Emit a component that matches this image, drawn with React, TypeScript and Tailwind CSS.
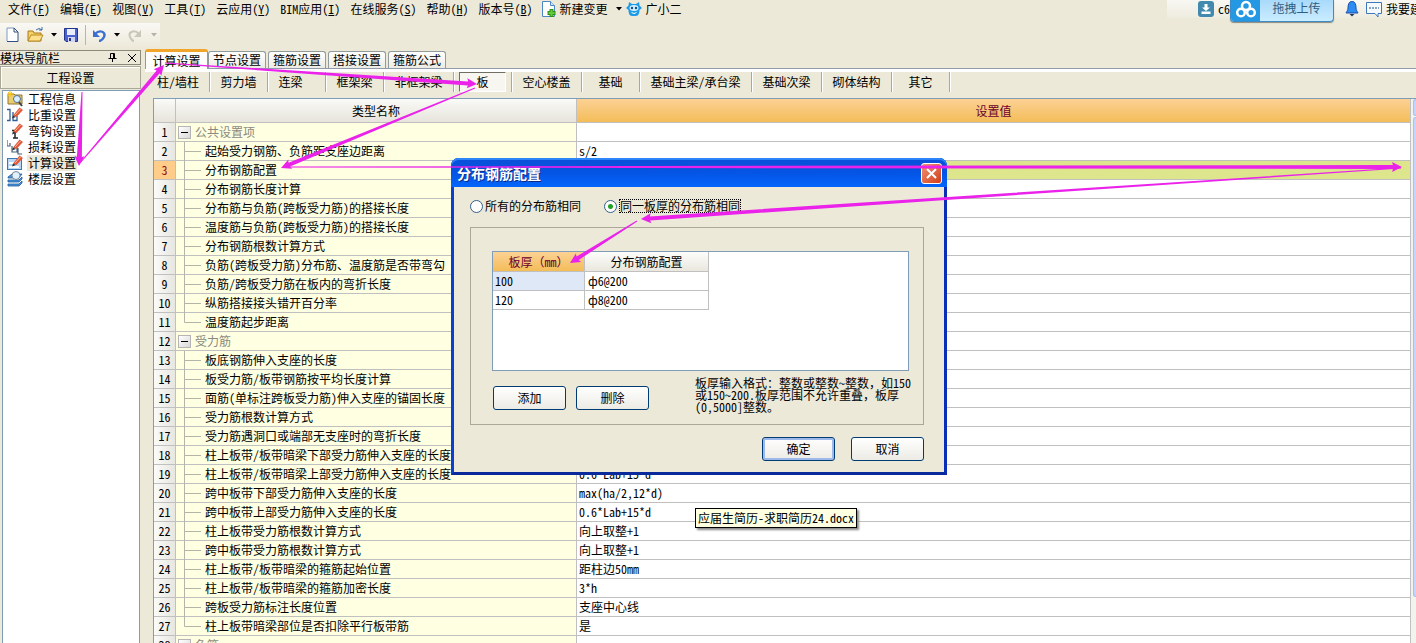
import React, { useState } from "react";

type Row = { name: string; value?: string; group?: boolean; last?: boolean; selected?: boolean };

const rows: Row[] = [
  { name: "公共设置项", group: true },
  { name: "起始受力钢筋、负筋距支座边距离", value: "s/2" },
  { name: "分布钢筋配置", selected: true },
  { name: "分布钢筋长度计算" },
  { name: "分布筋与负筋(跨板受力筋)的搭接长度" },
  { name: "温度筋与负筋(跨板受力筋)的搭接长度" },
  { name: "分布钢筋根数计算方式" },
  { name: "负筋(跨板受力筋)分布筋、温度筋是否带弯勾" },
  { name: "负筋/跨板受力筋在板内的弯折长度" },
  { name: "纵筋搭接接头错开百分率" },
  { name: "温度筋起步距离", last: true },
  { name: "受力筋", group: true },
  { name: "板底钢筋伸入支座的长度" },
  { name: "板受力筋/板带钢筋按平均长度计算" },
  { name: "面筋(单标注跨板受力筋)伸入支座的锚固长度" },
  { name: "受力筋根数计算方式" },
  { name: "受力筋遇洞口或端部无支座时的弯折长度" },
  { name: "柱上板带/板带暗梁下部受力筋伸入支座的长度" },
  { name: "柱上板带/板带暗梁上部受力筋伸入支座的长度", value: "0.6*Lab+15*d" },
  { name: "跨中板带下部受力筋伸入支座的长度", value: "max(ha/2,12*d)" },
  { name: "跨中板带上部受力筋伸入支座的长度", value: "0.6*Lab+15*d" },
  { name: "柱上板带受力筋根数计算方式", value: "向上取整+1" },
  { name: "跨中板带受力筋根数计算方式", value: "向上取整+1" },
  { name: "柱上板带/板带暗梁的箍筋起始位置", value: "距柱边50mm" },
  { name: "柱上板带/板带暗梁的箍筋加密长度", value: "3*h" },
  { name: "跨板受力筋标注长度位置", value: "支座中心线" },
  { name: "柱上板带暗梁部位是否扣除平行板带筋", value: "是", last: true },
  { name: "负筋", group: true },
];

const menus: [string, string][] = [
  ["文件", "F"], ["编辑", "E"], ["视图", "V"], ["工具", "T"], ["云应用", "Y"],
  ["BIM应用", "I"], ["在线服务", "S"], ["帮助", "H"], ["版本号", "B"],
];

const categories: [string, string][] = [
  ["柱/墙柱", "w-[59px] pr-1"], ["剪力墙", "w-[58px]"], ["连梁", "w-[58px] pr-3"], ["框架梁", "w-[58px]"],
  ["非框架梁", "w-[70px]"], ["板", "w-[58px]"], ["空心楼盖", "w-[70px]"], ["基础", "w-[58px]"],
  ["基础主梁/承台梁", "w-[112px]"], ["基础次梁", "w-[70px]"], ["砌体结构", "w-[70px]"], ["其它", "w-[58px]"],
];

const arrows: [number, number, number, number, number][] = [
  [82, 92, 79, 166, 5],
  [80, 163, 164, 65, 4],
  [165, 63, 477, 84, 4],
  [475, 88, 281, 168, 4],
  [284, 167, 1402, 167, 4],
  [1401, 168, 641, 219, 4],
  [637, 221, 570, 263, 4],
];

function arrowPoints([x1, y1, x2, y2, w]: [number, number, number, number, number]) {
  const len = Math.hypot(x2 - x1, y2 - y1);
  const ux = (x2 - x1) / len;
  const uy = (y2 - y1) / len;
  const at = (d: number, s: number) => `${x1 + ux * d - uy * s},${y1 + uy * d + ux * s}`;
  return [at(0, 0.5), at(len - 9, w / 2), at(len - 10, 5), at(len, 0), at(len - 10, -5), at(len - 9, -w / 2), at(0, -0.5)].join(" ");
}

function Caret({ dim }: { dim?: boolean }) {
  return (
    <svg width="6" height="4" viewBox="0 0 6 4" className="shrink-0">
      <path d="M0 0h6L3 3.4z" fill={dim ? "#b5b3a8" : "#000"} />
    </svg>
  );
}

function Pencil() {
  return (
    <g>
      <path d="M6 8.500 12.500 0.500 16 3 9.500 10z" fill="#e05a3a" />
      <path d="M8 8l5.500-6" stroke="#ffb59a" />
      <path d="M5 11.500 6 8.500 9 10z" fill="#333" />
    </g>
  );
}

function NavIcon({ kind }: { kind: number }) {
  return (
    <svg width="16" height="16" viewBox="0 0 16 16" className="shrink-0">
      {kind === 0 && (
        <g>
          <path d="M1 3h6l1 1h7v9H1z" fill="#eccd6d" stroke="#8f7430" />
          <path d="M3 0v6M0 3h6M1 1l4 4M5 1L1 5" stroke="#f5c518" />
          <circle cx="10" cy="8" r="3.500" fill="#d9efff" stroke="#51718e" />
          <path d="M12 11l3 4" stroke="#444" strokeWidth="2" />
        </g>
      )}
      {kind === 1 && (
        <g>
          <path d="M0 2.500h3v11H0M6 5v8.500h4V9" fill="none" stroke="#2f5f96" strokeWidth="1.300" />
          <Pencil />
        </g>
      )}
      {kind === 2 && (
        <g>
          <path d="M5 7.500h3v7M6 15h5" fill="none" stroke="#222" strokeWidth="1.500" />
          <Pencil />
        </g>
      )}
      {kind === 3 && (
        <g>
          <path d="M0 1v6h3V4M5 7v6h5V9M11 9v6h4" fill="none" stroke="#46627c" strokeWidth="1.200" />
          <Pencil />
        </g>
      )}
      {kind === 4 && (
        <g>
          <rect x="0.500" y="3.500" width="14" height="11" fill="#b9d8f6" stroke="#3c78b8" />
          <path d="M2 8h5M2 12h10" stroke="#fff" strokeWidth="2" />
          <Pencil />
        </g>
      )}
      {kind === 5 && (
        <g>
          <path d="M1 6l4-3h10l-3 4H1zM1 9h11l3-3v2l-3 3H1zM1 13h11l3-3v2l-3 3H1z" fill="#4d96dc" stroke="#1c5b9e" strokeWidth="0.800" />
          <circle cx="9" cy="4.500" r="4" fill="#dff1ff" stroke="#7a8995" />
        </g>
      )}
    </svg>
  );
}

function MenuBar() {
  return (
    <header className="flex h-[18px] shrink-0 items-center pl-2">
      <nav className="flex gap-[10px]">
        {menus.map(([label, key]) => (
          <button key={key} className="h-[18px]">
            {label}(<span className="underline">{key}</span>)
          </button>
        ))}
      </nav>
      <button className="ml-2 flex items-center">
        <svg width="15" height="18" viewBox="0 0 15 18">
          <path d="M1.500 1.500h8l4 4v11h-12z" fill="#fff" stroke="#4c87c7" />
          <path d="M9.500 1.500v4h4" fill="#d4e6fa" stroke="#4c87c7" />
          <path d="M10.500 9v8M6.500 13h8" stroke="#2f8f1b" strokeWidth="4" />
          <path d="M10.500 10v6M7.500 13h6" stroke="#65c93c" strokeWidth="2" />
        </svg>
        <span className="mr-2 ml-1">新建变更</span>
        <Caret />
      </button>
      <button className="ml-1 flex items-center gap-1">
        <svg width="16" height="16" viewBox="0 0 16 16">
          <path d="M3 1l3 2h4l3-2 .5 3.500L16 7l-2.500 2c0 3-1 6-3.500 6H6c-2.500 0-3.500-3-3.500-6L0 7l2.500-2.500z" fill="#1e9be6" />
          <ellipse cx="8" cy="7" rx="4.500" ry="3" fill="#d5f0ff" />
          <circle cx="6" cy="7" r="1.200" fill="#124d85" />
          <circle cx="10" cy="7" r="1.200" fill="#124d85" />
          <path d="M5.500 11.500q2.500 2 5 0" fill="none" stroke="#fff" />
        </svg>
        广小二
      </button>
      <div className="ml-auto flex h-[18px] w-[249px] items-center overflow-x-clip bg-linear-to-b from-[#f8f7f2] to-[#efecdf] pl-[31px] whitespace-nowrap">
        <svg width="16" height="16" viewBox="0 0 16 16" className="shrink-0">
          <rect width="16" height="16" rx="3" fill="#4389ae" />
          <path d="M6.500 3h3v3.500H12L8 10 4 6.500h2.500zM3.500 10.500h9V13h-9z" fill="#fff" />
        </svg>
        <span className="ml-1 w-3 shrink-0">c6</span>
        <button className="flex h-[22px] w-[104px] shrink-0 items-center self-start overflow-hidden rounded-b border border-t-0 border-[#3d8cc6] bg-linear-to-b from-[#a9dafb] to-[#c9ecff] text-[#2f5d80] shadow-[0_1px_1px_#8a8a80]">
          <svg width="29" height="22" viewBox="0 0 29 22">
            <rect width="29" height="22" fill="#2598e4" />
            <g fill="none" stroke="#fff" strokeWidth="2.500">
              <circle cx="15" cy="6" r="4" />
              <circle cx="10" cy="12.500" r="3.800" />
              <circle cx="20" cy="12.500" r="3.800" />
            </g>
          </svg>
          <span className="flex-1 self-start text-center">拖拽上传</span>
        </button>
        <svg width="14" height="16" viewBox="0 0 14 16" className="ml-[11px] shrink-0">
          <path d="M7 0c3 1 4 3 4 7 0 2 1 3 2 5H1c1-2 2-3 2-5 0-4 1-6 4-7z" fill="#2d8cf2" stroke="#1c4da8" />
          <path d="M4.500 13h5L7 15.500z" fill="#223a5c" />
        </svg>
        <svg width="16" height="16" viewBox="0 0 16 16" className="ml-[7px] shrink-0">
          <path d="M.5 1.500h15v11H12V16l-3-3.500H.5z" fill="#f5faff" stroke="#3f77ba" />
          <path d="M3 7h10" stroke="#234f8a" strokeDasharray="2 1" />
        </svg>
        <span className="ml-1">我要建</span>
      </div>
    </header>
  );
}

function Toolbar() {
  return (
    <div className="mt-[5px] flex h-6 w-40 shrink-0 items-center bg-linear-to-b from-[#f9f8f4] to-[#edeadb] pl-[6px]">
      <button aria-label="新建">
        <svg width="13" height="16" viewBox="0 0 13 16">
          <path d="M1 1h7l4 4v9.500H1z" fill="#fff" />
          <path d="M1 14V1h7" fill="none" stroke="#7d9ac8" />
          <path d="M8 1l4 4v9.500H1M8 1v4h4" fill="none" stroke="#31507f" />
        </svg>
      </button>
      <button aria-label="打开" className="ml-2 flex items-center gap-[6px]">
        <svg width="18" height="16" viewBox="0 0 18 16">
          <path d="M1 14V4h5l1 2h7v8z" fill="#f6cf67" stroke="#a87b1c" />
          <path d="M1 14l3-6h12l-3 6z" fill="#ffe08a" stroke="#b88a25" />
          <path d="M9 3q3-3 6 0M15 0v3h-3" fill="none" stroke="#3f6ea3" />
        </svg>
        <Caret />
      </button>
      <button aria-label="保存" className="ml-[7px]">
        <svg width="14" height="14" viewBox="0 0 14 14">
          <path d="M.5.5h13v13H2l-1.500-1.500z" fill="#4c63cf" stroke="#26358c" />
          <rect x="3" y="1" width="8" height="6" fill="#e8eefc" />
          <rect x="4" y="9" width="7" height="5" fill="#cfd6ee" />
          <rect x="5" y="10" width="2" height="3" fill="#26358c" />
        </svg>
      </button>
      <span className="ml-[7px] h-5 w-px bg-[#b9b6a5]" />
      <button aria-label="撤销" className="ml-[7px] flex items-center gap-2">
        <svg width="13" height="13" viewBox="0 0 13 13">
          <path d="M2 5c5-5 11-2 9 3-1 2-3 4-5 4" fill="none" stroke="#3b6fd0" strokeWidth="2.400" />
          <path d="M0 1v7h7z" fill="#3b6fd0" />
        </svg>
        <Caret />
      </button>
      <button aria-label="重做" className="ml-2 flex items-center gap-[10px]">
        <svg width="13" height="13" viewBox="0 0 13 13">
          <path d="M11 5C6 0 0 3 2 8c1 2 2 4 4 4" fill="none" stroke="#c9c6ba" strokeWidth="2" />
          <path d="M13 1v7H6z" fill="#c9c6ba" />
        </svg>
        <Caret dim />
      </button>
    </div>
  );
}

function Sidebar() {
  return (
    <aside className="flex w-[141px] shrink-0 flex-col pt-[3px]">
      <div className="flex h-[15px] items-center border border-l-0 border-[#8b897b] leading-[13px]">
        <span>模块导航栏</span>
        <svg width="9" height="9" viewBox="0 0 9 9" className="ml-auto">
          <path d="M2.500 5V.5h4V5M.5 5.500h8M4.500 6v3M5.500 1v4" fill="none" stroke="#000" />
        </svg>
        <svg width="8" height="8" viewBox="0 0 8 8" className="mr-1 ml-[11px]">
          <path d="M0 0l8 8M8 0L0 8" stroke="#000" />
        </svg>
      </div>
      <button className="mt-px h-[23px] border border-[#aaa899] bg-[#ece9d8] shadow-[inset_1px_1px_#fff]">工程设置</button>
      <ul className="mt-px mr-px ml-[2px] flex-1 border border-b-0 border-[#7f9db9] bg-white">
        {["工程信息", "比重设置", "弯钩设置", "损耗设置", "计算设置", "楼层设置"].map((t, i) => (
          <li key={t} className="flex h-4 items-center gap-1 pl-1">
            <NavIcon kind={i} />
            <button className={i === 4 ? "h-4 bg-[#ece9d8] px-px leading-4" : "h-4 px-px leading-4"}>{t}</button>
          </li>
        ))}
      </ul>
    </aside>
  );
}

function SettingsTable() {
  return (
    <div className="ml-2 flex min-h-0 flex-1 overflow-hidden border-t border-l border-[#7f9db9] bg-white">
      <div className="min-w-0 flex-1">
        <table className="w-full table-fixed border-separate border-spacing-0">
          <colgroup>
            <col className="w-[22px]" />
            <col className="w-[401px]" />
            <col />
          </colgroup>
          <thead>
            <tr className="h-6">
              <th className="border-r border-b border-[#c0c0c0] bg-linear-to-b from-[#fafaf7] to-[#e6e4db] p-0" />
              <th className="border-r border-b border-[#c0c0c0] bg-linear-to-b from-[#fafaf7] to-[#e6e4db] p-0 font-normal">类型名称</th>
              <th className="border-r border-b border-[#c0c0c0] bg-linear-to-b from-[#fcd193] to-[#f3bd57] p-0 font-normal text-[#6b0030]">设置值</th>
            </tr>
          </thead>
          <tbody>
            {rows.map((r, i) => (
              <tr key={i} className="h-[19px]">
                <td className={"border-r border-b border-[#c0c0c0] p-0 text-center " + (r.selected ? "bg-[#ffcc8a] text-[#8c1010]" : "bg-linear-to-r from-[#fbfbf9] to-[#e7e6e0]")}>
                  {i + 1}
                </td>
                <td className="border-r border-b border-[#c0c0c0] bg-[#ffffe1] p-0">
                  <div className="flex h-[18px] items-center whitespace-nowrap">
                    {r.group ? (
                      <>
                        <button aria-label="折叠" className="ml-[2px] flex h-[13px] w-[13px] items-center justify-center border border-[#b5b5b5] bg-linear-to-br from-white to-[#d8d8d8]">
                          <span className="h-px w-[7px] bg-black" />
                        </button>
                        <span className="ml-1 text-[#8a8a80]">{r.name}</span>
                      </>
                    ) : (
                      <>
                        <svg width="17" height="19" viewBox="0 0 17 19" className="ml-2 shrink-0 self-start overflow-visible">
                          <path d={r.last ? "M.5 0V9.500H17" : "M.5 0V19M0 9.500H17"} fill="none" stroke="#b4b4a8" />
                        </svg>
                        <span className="ml-1">{r.name}</span>
                      </>
                    )}
                  </div>
                </td>
                <td className={"border-r border-b border-[#c0c0c0] p-0 pl-[2px] " + (r.selected ? "bg-[#dde68c]" : "bg-white")}>{r.value}</td>
              </tr>
            ))}
          </tbody>
        </table>
      </div>
      <div className="w-[5px] shrink-0 bg-[#f3f3ee] pl-[2px]">
        <div className="h-[17px] rounded-l border border-r-0 border-[#a9bff0] bg-[#c6d5fd]" />
        <div className="mt-px h-[480px] rounded-l border border-r-0 border-[#a9bff0] bg-[#c6d5fd]" />
      </div>
    </div>
  );
}

const xpButton =
  "h-6 w-[73px] rounded-[3px] border border-[#003c74] bg-linear-to-b from-white to-[#ecebe5]";

function Dialog() {
  const [same, setSame] = useState(true);
  return (
    <section
      role="dialog"
      aria-label="分布钢筋配置"
      className="absolute top-[158px] left-[451px] flex h-[317px] w-[496px] flex-col rounded-t-lg border-[3px] border-t-0 border-[#0a3fd0] border-r-[#0a2fb4] border-b-[#0a2a9c] bg-[#ece9d8]"
    >
      <div className="-mx-[3px] flex h-[29px] shrink-0 items-center justify-between rounded-t-lg bg-linear-to-b from-[#0a50d8] via-[#0554e4] to-[#0266fc] pt-px pr-[5px] pl-[6px] shadow-[inset_0_2px_#2c84f8]">
        <h2 className="text-[14px] font-bold text-white [text-shadow:1px_1px_#0a2a86]">分布钢筋配置</h2>
        <button aria-label="关闭" className="flex h-[21px] w-[21px] items-center justify-center rounded-[3px] border border-white bg-linear-to-br from-[#ee9272] to-[#cf3a10]">
          <svg width="11" height="11" viewBox="0 0 11 11">
            <path d="M1 1l9 9M10 1l-9 9" stroke="#fff" strokeWidth="2" />
          </svg>
        </button>
      </div>
      <div className="mt-[11px] flex h-4 items-center pl-4">
        <label className="flex items-center gap-[2px]">
          <input type="radio" name="scope" checked={!same} onChange={() => setSame(false)} className="h-[13px] w-[13px] appearance-none rounded-full border border-[#335f8c] bg-white" />
          所有的分布筋相同
        </label>
        <label className="ml-[23px] flex items-center gap-[2px]">
          <input type="radio" name="scope" checked={same} onChange={() => setSame(true)} className="h-[13px] w-[13px] appearance-none rounded-full border border-[#335f8c] bg-white checked:bg-[radial-gradient(circle,#21a121_2px,#ffffff_3px)]" />
          <span className="border border-dotted border-black leading-[12px]">同一板厚的分布筋相同</span>
        </label>
      </div>
      <div className="mr-5 ml-4 mt-[13px] flex h-[198px] shrink-0 flex-col border border-[#aca899] pl-[21px] pt-[23px]">
        <div className="h-[120px] w-[417px] shrink-0 border border-[#7f9db9] bg-white">
          <table className="table-fixed border-separate border-spacing-0">
            <colgroup>
              <col className="w-[92px]" />
              <col className="w-[124px]" />
            </colgroup>
            <thead>
              <tr className="h-5">
                <th className="border-r border-b border-[#c0c0c0] bg-linear-to-b from-[#fcd193] to-[#f3bd57] p-0 font-normal whitespace-nowrap text-[#6b0030]">板厚（mm）</th>
                <th className="border-r border-b border-[#c0c0c0] bg-linear-to-b from-[#fdfdfb] to-[#e9e7de] p-0 font-normal">分布钢筋配置</th>
              </tr>
            </thead>
            <tbody>
              <tr className="h-[19px]">
                <td className="border-r border-b border-[#c0c0c0] bg-[#dfe8f6] p-0 pl-[2px]">100</td>
                <td className="border-r border-b border-[#c0c0c0] p-0 pl-[3px]">ф6@200</td>
              </tr>
              <tr className="h-[19px]">
                <td className="border-r border-b border-[#c0c0c0] p-0 pl-[2px]">120</td>
                <td className="border-r border-b border-[#c0c0c0] p-0 pl-[3px]">ф8@200</td>
              </tr>
            </tbody>
          </table>
        </div>
        <div className="flex pt-[6px]">
          <div className="flex gap-[10px] pt-[9px] pl-px">
            <button className={xpButton}>添加</button>
            <button className={xpButton}>删除</button>
          </div>
          <p className="ml-[46px] leading-3 whitespace-nowrap">
            板厚输入格式：整数或整数~整数，如150
            <br />
            或150~200.板厚范围不允许重叠，板厚
            <br />
            (0,5000]整数。
          </p>
        </div>
      </div>
      <div className="mt-3 mr-5 flex justify-end gap-4">
        <button className={xpButton + " shadow-[inset_0_0_0_2px_#9db9ec]"}>确定</button>
        <button className={xpButton}>取消</button>
      </div>
    </section>
  );
}

export default function App() {
  return (
    <div className="relative flex h-screen flex-col overflow-hidden bg-[#ece9d8] font-['Noto_Sans_Mono_CJK_SC','Noto_Sans_CJK_SC',sans-serif] text-[12px] leading-[16px] text-black">
      <MenuBar />
      <Toolbar />
      <div className="flex min-h-0 flex-1">
        <Sidebar />
        <main className="ml-1 flex min-w-0 flex-1 flex-col pt-[2px]">
          <div className="flex h-5 shrink-0 items-end gap-[2px] border-b border-[#8f9bab]">
            {["计算设置", "节点设置", "箍筋设置", "搭接设置", "箍筋公式"].map((t, i) => (
              <button
                key={t}
                className={
                  i === 0
                    ? "-mr-[2px] -mb-px h-5 w-[63px] rounded-t-[3px] border border-t-[3px] border-b-0 border-[#919b9c] border-t-[#f2a52b] bg-[#fcfcfa] leading-[16px]"
                    : "h-[17px] w-[58px] rounded-t-[3px] border border-b-0 border-[#919b9c] bg-linear-to-b from-white to-[#ecebe4] leading-[16px]"
                }
              >
                {t}
              </button>
            ))}
          </div>
          <div className="flex h-[29px] shrink-0 items-start border-t-[3px] border-white pl-[6px] whitespace-nowrap">
            {categories.map(([t, w]) => (
              <div key={t} className={"flex h-5 justify-center border-r border-[#aca899] shadow-[1px_0_#fff] " + w}>
                <button className={t === "板" ? "mx-auto h-5 w-[47px] border border-[#fff] border-t-[#716f64] border-l-[#716f64] bg-[#f7f6f0] text-center" : "h-5"}>{t}</button>
              </div>
            ))}
          </div>
          <SettingsTable />
        </main>
      </div>
      <Dialog />
      <div role="tooltip" className="absolute top-[508px] left-[695px] border border-black bg-[#ffffe1] px-[2px] py-px shadow-[2px_2px_2px_#888]">
        应届生简历-求职简历24.docx
      </div>
      <svg width="1416" height="643" viewBox="0 0 1416 643" className="pointer-events-none absolute top-0 left-0">
        {arrows.map((a, i) => (
          <polygon key={i} points={arrowPoints(a)} fill="#ea22ea" />
        ))}
      </svg>
    </div>
  );
}
